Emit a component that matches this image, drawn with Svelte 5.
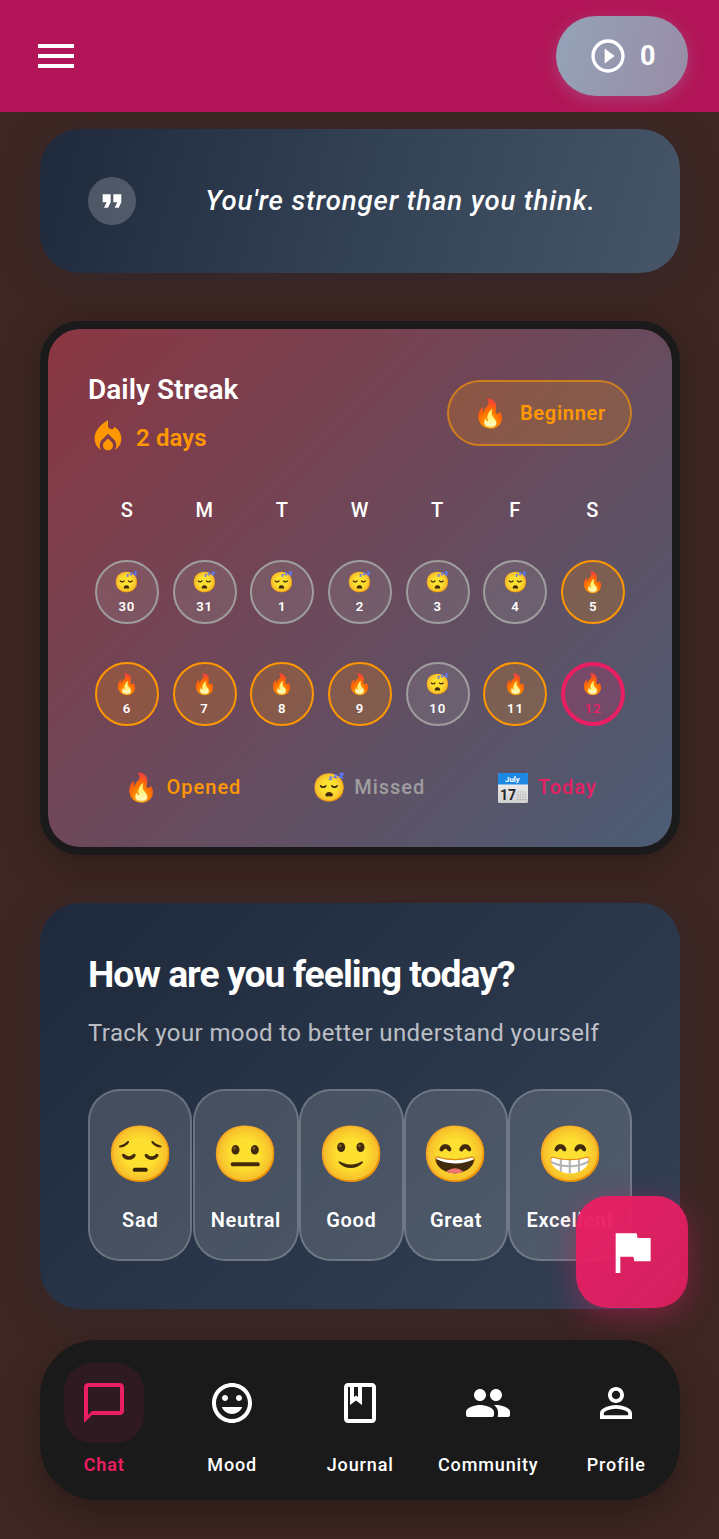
<script>
  const weekdays = ['S', 'M', 'T', 'W', 'T', 'F', 'S'];
  const days = [
    [30, 'missed'], [31, 'missed'], [1, 'missed'], [2, 'missed'], [3, 'missed'], [4, 'missed'], [5, 'opened'],
    [6, 'opened'], [7, 'opened'], [8, 'opened'], [9, 'opened'], [10, 'missed'], [11, 'opened'], [12, 'today']
  ];
  const moods = [
    ['😔', 'Sad'], ['😐', 'Neutral'], ['🙂', 'Good'], ['😄', 'Great'], ['😁', 'Excellent']
  ];
  const tabs = [
    { label: 'Chat', path: 'M20 2H4c-1.1 0-2 .9-2 2v18l4-4h14c1.1 0 2-.9 2-2V4c0-1.1-.9-2-2-2zm0 14H6l-2 2V4h16v12z' },
    { label: 'Mood', path: 'M11.99 2C6.47 2 2 6.48 2 12s4.47 10 9.99 10C17.52 22 22 17.52 22 12S17.52 2 11.99 2zM12 20c-4.42 0-8-3.58-8-8s3.58-8 8-8 8 3.58 8 8-3.58 8-8 8zm3.5-9c.83 0 1.5-.67 1.5-1.5S16.33 8 15.5 8 14 8.67 14 9.5s.67 1.5 1.5 1.5zm-7 0c.83 0 1.5-.67 1.5-1.5S9.33 8 8.5 8 7 8.67 7 9.5 7.67 11 8.5 11zm3.5 6.5c2.33 0 4.31-1.46 5.11-3.5H6.89c.8 2.04 2.78 3.5 5.11 3.5z' },
    { label: 'Journal', path: 'M18 2H6c-1.1 0-2 .9-2 2v16c0 1.1.9 2 2 2h12c1.1 0 2-.9 2-2V4c0-1.1-.9-2-2-2zM9 4h2v5l-1-.75L9 9V4zm9 16H6V4h1v9l3-2.25L13 13V4h5v16z' },
    { label: 'Community', path: 'M16 11c1.66 0 2.99-1.34 2.99-3S17.66 5 16 5s-3 1.34-3 3 1.34 3 3 3zm-8 0c1.66 0 2.99-1.34 2.99-3S9.66 5 8 5 5 6.34 5 8s1.34 3 3 3zm0 2c-2.33 0-7 1.17-7 3.5V18c0 .55.45 1 1 1h12c.55 0 1-.45 1-1v-1.5c0-2.33-4.67-3.5-7-3.5zm8 0c-.29 0-.62.02-.97.05.02.01.03.03.04.04 1.14.83 1.93 1.94 1.93 3.41V18c0 .35-.07.69-.18 1H22c.55 0 1-.45 1-1v-1.5c0-2.33-4.67-3.5-7-3.5z' },
    { label: 'Profile', path: 'M12 5.9c1.16 0 2.1.94 2.1 2.1s-.94 2.1-2.1 2.1S9.9 9.16 9.9 8s.94-2.1 2.1-2.1m0 9c2.97 0 6.1 1.46 6.1 2.1v1.1H5.9V17c0-.64 3.13-2.1 6.1-2.1M12 4C9.79 4 8 5.79 8 8s1.79 4 4 4 4-1.79 4-4-1.79-4-4-4zm0 9c-2.67 0-8 1.34-8 4v3h16v-3c0-2.66-5.33-4-8-4z' }
  ];
</script>

<div class="app">
  <header>
    <svg class="menu" viewBox="0 0 24 24"><path d="M3 18h18v-2H3v2zm0-5h18v-2H3v2zm0-7v2h18V6H3z" /></svg>
    <div class="points">
      <svg viewBox="0 0 24 24"><path d="M10 16.5l6-4.5-6-4.5v9zM12 2C6.48 2 2 6.48 2 12s4.48 10 10 10 10-4.48 10-10S17.52 2 12 2zm0 18c-4.41 0-8-3.59-8-8s3.59-8 8-8 8 3.59 8 8-3.59 8-8 8z" /></svg>
      <span>0</span>
    </div>
  </header>

  <main>
    <section class="quote">
      <div class="quote-icon">
        <svg viewBox="0 0 24 24"><path d="M6 17h3l2-4V7H5v6h3zm8 0h3l2-4V7h-6v6h3z" /></svg>
      </div>
      <p>You're stronger than you think.</p>
    </section>

    <section class="streak">
      <div class="streak-head">
        <div>
          <h2>Daily Streak</h2>
          <div class="count">
            <svg viewBox="0 0 24 24"><path d="M12 12.9l-2.13 2.09C9.31 15.55 9 16.28 9 17.06 9 18.68 10.35 20 12 20s3-1.32 3-2.94c0-.78-.31-1.52-.87-2.07z" /><path d="M16 6l-.44.55C14.38 8.02 12 7.19 12 5.3V2S4 6 4 13c0 2.92 1.56 5.47 3.89 6.86-.56-.79-.89-1.76-.89-2.8 0-1.32.52-2.56 1.47-3.5L12 10.1l3.53 3.47c.95.93 1.47 2.17 1.47 3.5 0 1.02-.31 1.96-.85 2.75 1.89-1.15 3.29-3.06 3.71-5.3.66-3.55-1.07-6.9-3.86-8.52z" /></svg>
            <span>2 days</span>
          </div>
        </div>
        <div class="level"><i>🔥</i><span>Beginner</span></div>
      </div>
      <div class="week names">
        {#each weekdays as d}<span>{d}</span>{/each}
      </div>
      <div class="week dates">
        {#each days as [n, state]}
          <div class="day {state}"><i>{state === 'missed' ? '😴' : '🔥'}</i><b>{n}</b></div>
        {/each}
      </div>
      <div class="legend">
        <div class="opened"><i>🔥</i><span>Opened</span></div>
        <div class="missed"><i>😴</i><span>Missed</span></div>
        <div class="today">
          <svg class="calendar" viewBox="0 0 34 34">
            <defs>
              <linearGradient id="sheet" x1="0" y1="0" x2="0" y2="1">
                <stop offset="0" stop-color="#fafafa" />
                <stop offset="1" stop-color="#d0d0d0" />
              </linearGradient>
            </defs>
            <rect x="2" y="2" width="30" height="30" rx="1.6" fill="url(#sheet)" />
            <path d="M2 13.6V3.6C2 2.7 2.7 2 3.6 2H30.4C31.3 2 32 2.7 32 3.6V13.6z" fill="#1e88e5" />
            <text x="16.4" y="10.6" font-size="7.8" text-anchor="middle" fill="#fff">July</text>
            <text x="12" y="28.8" font-size="14" text-anchor="middle" fill="#262626">17</text>
            <path d="M21 21H30M21 23.5H30M21 26H30M21 28.5H30" stroke="#a8a8a8" stroke-width="1.2" stroke-dasharray="1.4 1.2" fill="none" />
          </svg>
          <span>Today</span>
        </div>
      </div>
    </section>

    <section class="mood">
      <h1>How are you feeling today?</h1>
      <p>Track your mood to better understand yourself</p>
      <div class="choices">
        {#each moods as [emoji, label]}
          <div class="choice"><i>{emoji}</i><span>{label}</span></div>
        {/each}
      </div>
    </section>
  </main>

  <button class="fab" aria-label="Flag">
    <svg viewBox="0 0 24 24"><path d="M14.4 6L14 4H5v17h2v-7h5.6l.4 2h7V6z" /></svg>
  </button>

  <nav>
    {#each tabs as tab, i}
      <div class="tab" class:active={i === 0}>
        <div class="tab-icon"><svg viewBox="0 0 24 24"><path d={tab.path} /></svg></div>
        <span>{tab.label}</span>
      </div>
    {/each}
  </nav>
</div>

<style>
  :global(body) { margin: 0; background: #3e2723; }
  .app {
    position: relative;
    box-sizing: border-box;
    width: 719px;
    height: 1539px;
    overflow: hidden;
    font-family: Roboto, sans-serif;
    color: #fff;
    background: #3e2723;
  }
  h1, h2, p { margin: 0; }
  svg { display: block; fill: currentColor; flex: none; }
  i { font-style: normal; font-family: Roboto, 'Noto Color Emoji', sans-serif; font-weight: 400; }
  header {
    position: relative;
    z-index: 1;
    box-sizing: border-box;
    height: 112px;
    padding: 0 31px 0 32px;
    display: flex;
    align-items: center;
    justify-content: space-between;
    overflow: hidden;
    background: #b21557;
  }
  .menu { width: 48px; height: 48px; }
  .points {
    box-sizing: border-box;
    width: 132px;
    height: 80px;
    padding: 0 32px;
    border-radius: 40px;
    display: flex;
    align-items: center;
    gap: 12px;
    background: linear-gradient(105deg, #94a3b8, #998ca6);
    box-shadow: 0 4px 16px rgba(148, 163, 184, 0.3);
    font-size: 27px;
    line-height: 32px;
    font-weight: 700;
  }
  .points span { padding-bottom: 1px; }
  .points svg { width: 40px; height: 40px; }
  main { padding: 17px 39px 0 40px; display: flex; flex-direction: column; }
  section { box-sizing: border-box; border-radius: 40px; }
  .quote {
    height: 144px;
    padding: 0 48px;
    display: flex;
    align-items: center;
    gap: 32px;
    background: linear-gradient(105deg, #1e293b, #334155 50%, #475569);
    box-shadow: 0 8px 40px rgba(30, 41, 59, 0.3);
  }
  .quote-icon {
    width: 48px;
    height: 48px;
    border-radius: 50%;
    display: grid;
    place-items: center;
    background: rgba(255, 255, 255, 0.2);
  }
  .quote-icon svg { width: 32px; height: 32px; }
  .quote p { flex: 1; padding: 0 0 2px 1px; text-align: center; font-size: 27.6px; font-style: italic; font-weight: 500; letter-spacing: 0.84px; white-space: nowrap; }
  .streak {
    margin-top: 48px;
    height: 534px;
    border: 8px solid #1a1a1a;
    padding: 40px;
    background: linear-gradient(135deg, #8b3642, #4a5d75) padding-box;
    box-shadow: 0 8px 40px rgba(0, 0, 0, 0.3);
  }
  .streak-head { height: 88px; display: flex; justify-content: space-between; align-items: center; }
  h2 { padding-top: 1px; font-size: 28px; line-height: 39px; font-weight: 600; letter-spacing: 0.04px; }
  .count { display: flex; align-items: center; gap: 8px; margin-top: 8px; color: #ff9800; font-size: 24px; font-weight: 600; letter-spacing: 0.1px; }
  .count span { padding-top: 2px; }
  .count svg { width: 40px; height: 40px; }
  .level {
    box-sizing: border-box;
    height: 66px;
    padding: 0 24px;
    border: 2px solid rgba(255, 152, 0, 0.6);
    border-radius: 33px;
    display: flex;
    align-items: center;
    gap: 12px;
    background: rgba(255, 152, 0, 0.2);
    color: #ff9800;
    font-size: 20px;
    font-weight: 600;
    letter-spacing: 0.72px;
  }
  .level i { font-size: 27.5px; }
  .week { display: grid; grid-template-columns: repeat(7, 1fr); justify-items: center; }
  .names { margin-top: 40px; padding-right: 1px; font-size: 20px; line-height: 26px; font-weight: 500; }
  .dates { margin-top: 37px; row-gap: 38px; }
  .day {
    box-sizing: border-box;
    width: 64px;
    height: 64px;
    border: 2px solid #9e9e9e;
    border-radius: 50%;
    display: flex;
    flex-direction: column;
    align-items: center;
    justify-content: center;
    gap: 5px;
    background: rgba(158, 158, 158, 0.2);
  }
  .day i { font-size: 20px; line-height: 24px; }
  .day b { font-size: 13.2px; line-height: 16px; font-weight: 600; letter-spacing: 0.9px; }
  .day.opened { border-color: #ff9800; background: rgba(255, 152, 0, 0.2); }
  .day.today { border: 4px solid #e91e63; background: rgba(233, 30, 99, 0.2); }
  .day.today b { color: #e91e63; }
  .legend { margin-top: 41px; height: 40px; padding-left: 1px; display: flex; justify-content: space-around; font-size: 20px; font-weight: 500; letter-spacing: 1px; }
  .legend div { display: flex; align-items: center; gap: 8px; }
  .legend i { font-size: 27.5px; letter-spacing: 0; }
  .calendar { width: 34px; height: 34px; margin-top: 2px; }
  .calendar text { font-weight: 700; letter-spacing: 0; }
  .legend .opened { color: #ff9800; }
  .legend .missed { color: #9e9e9e; }
  .legend .today { color: #e91e63; }
  .mood {
    margin-top: 48px;
    height: 406px;
    padding: 48px;
    background: linear-gradient(135deg, #1e293b, #334155);
    box-shadow: 0 8px 40px rgba(30, 41, 59, 0.3);
  }
  h1 { padding-bottom: 1px; font-size: 37.3px; line-height: 46px; font-weight: 700; letter-spacing: -0.98px; white-space: nowrap; }
  .mood p { margin-top: 19px; font-size: 24px; line-height: 32px; letter-spacing: 0.4px; color: rgba(255, 255, 255, 0.7); white-space: nowrap; }
  .choices { margin-top: 40px; display: flex; justify-content: space-between; }
  .choice {
    box-sizing: border-box;
    height: 172px;
    padding: 2px 16px 0;
    border: 2px solid rgba(255, 255, 255, 0.2);
    border-radius: 32px;
    background: rgba(255, 255, 255, 0.15);
    display: flex;
    flex-direction: column;
    align-items: center;
    justify-content: center;
    gap: 16px;
  }
  .choice i { font-size: 55px; line-height: 72px; }
  .choice span { font-size: 20px; line-height: 28px; font-weight: 600; letter-spacing: 0.68px; }
  .fab {
    position: absolute;
    left: 576px;
    top: 1196px;
    width: 112px;
    height: 112px;
    padding: 0;
    border: 0;
    border-radius: 32px;
    display: grid;
    place-items: center;
    color: #fff;
    background: linear-gradient(135deg, rgba(233, 30, 99, 0.98), rgba(233, 30, 99, 0.88));
    box-shadow: 0 8px 32px rgba(233, 30, 99, 0.4);
  }
  .fab svg { width: 56px; height: 56px; }
  nav {
    position: absolute;
    left: 40px;
    right: 39px;
    bottom: 39px;
    height: 160px;
    display: grid;
    grid-template-columns: repeat(5, 1fr);
    border-radius: 56px;
    background: #1a1a1a;
    box-shadow: 0 16px 40px rgba(0, 0, 0, 0.3);
  }
  .tab { display: flex; flex-direction: column; align-items: center; padding-top: 23px; }
  .tab-icon { width: 80px; height: 80px; border-radius: 28px; display: grid; place-items: center; }
  .tab svg { width: 48px; height: 48px; }
  .tab span { margin-top: 10px; padding-left: 0.5px; font-size: 18px; line-height: 24px; font-weight: 500; letter-spacing: 0.87px; }
  .active { color: #e91e63; }
  .active span { font-weight: 600; }
  .active .tab-icon { background: rgba(233, 30, 99, 0.1); }
</style>
